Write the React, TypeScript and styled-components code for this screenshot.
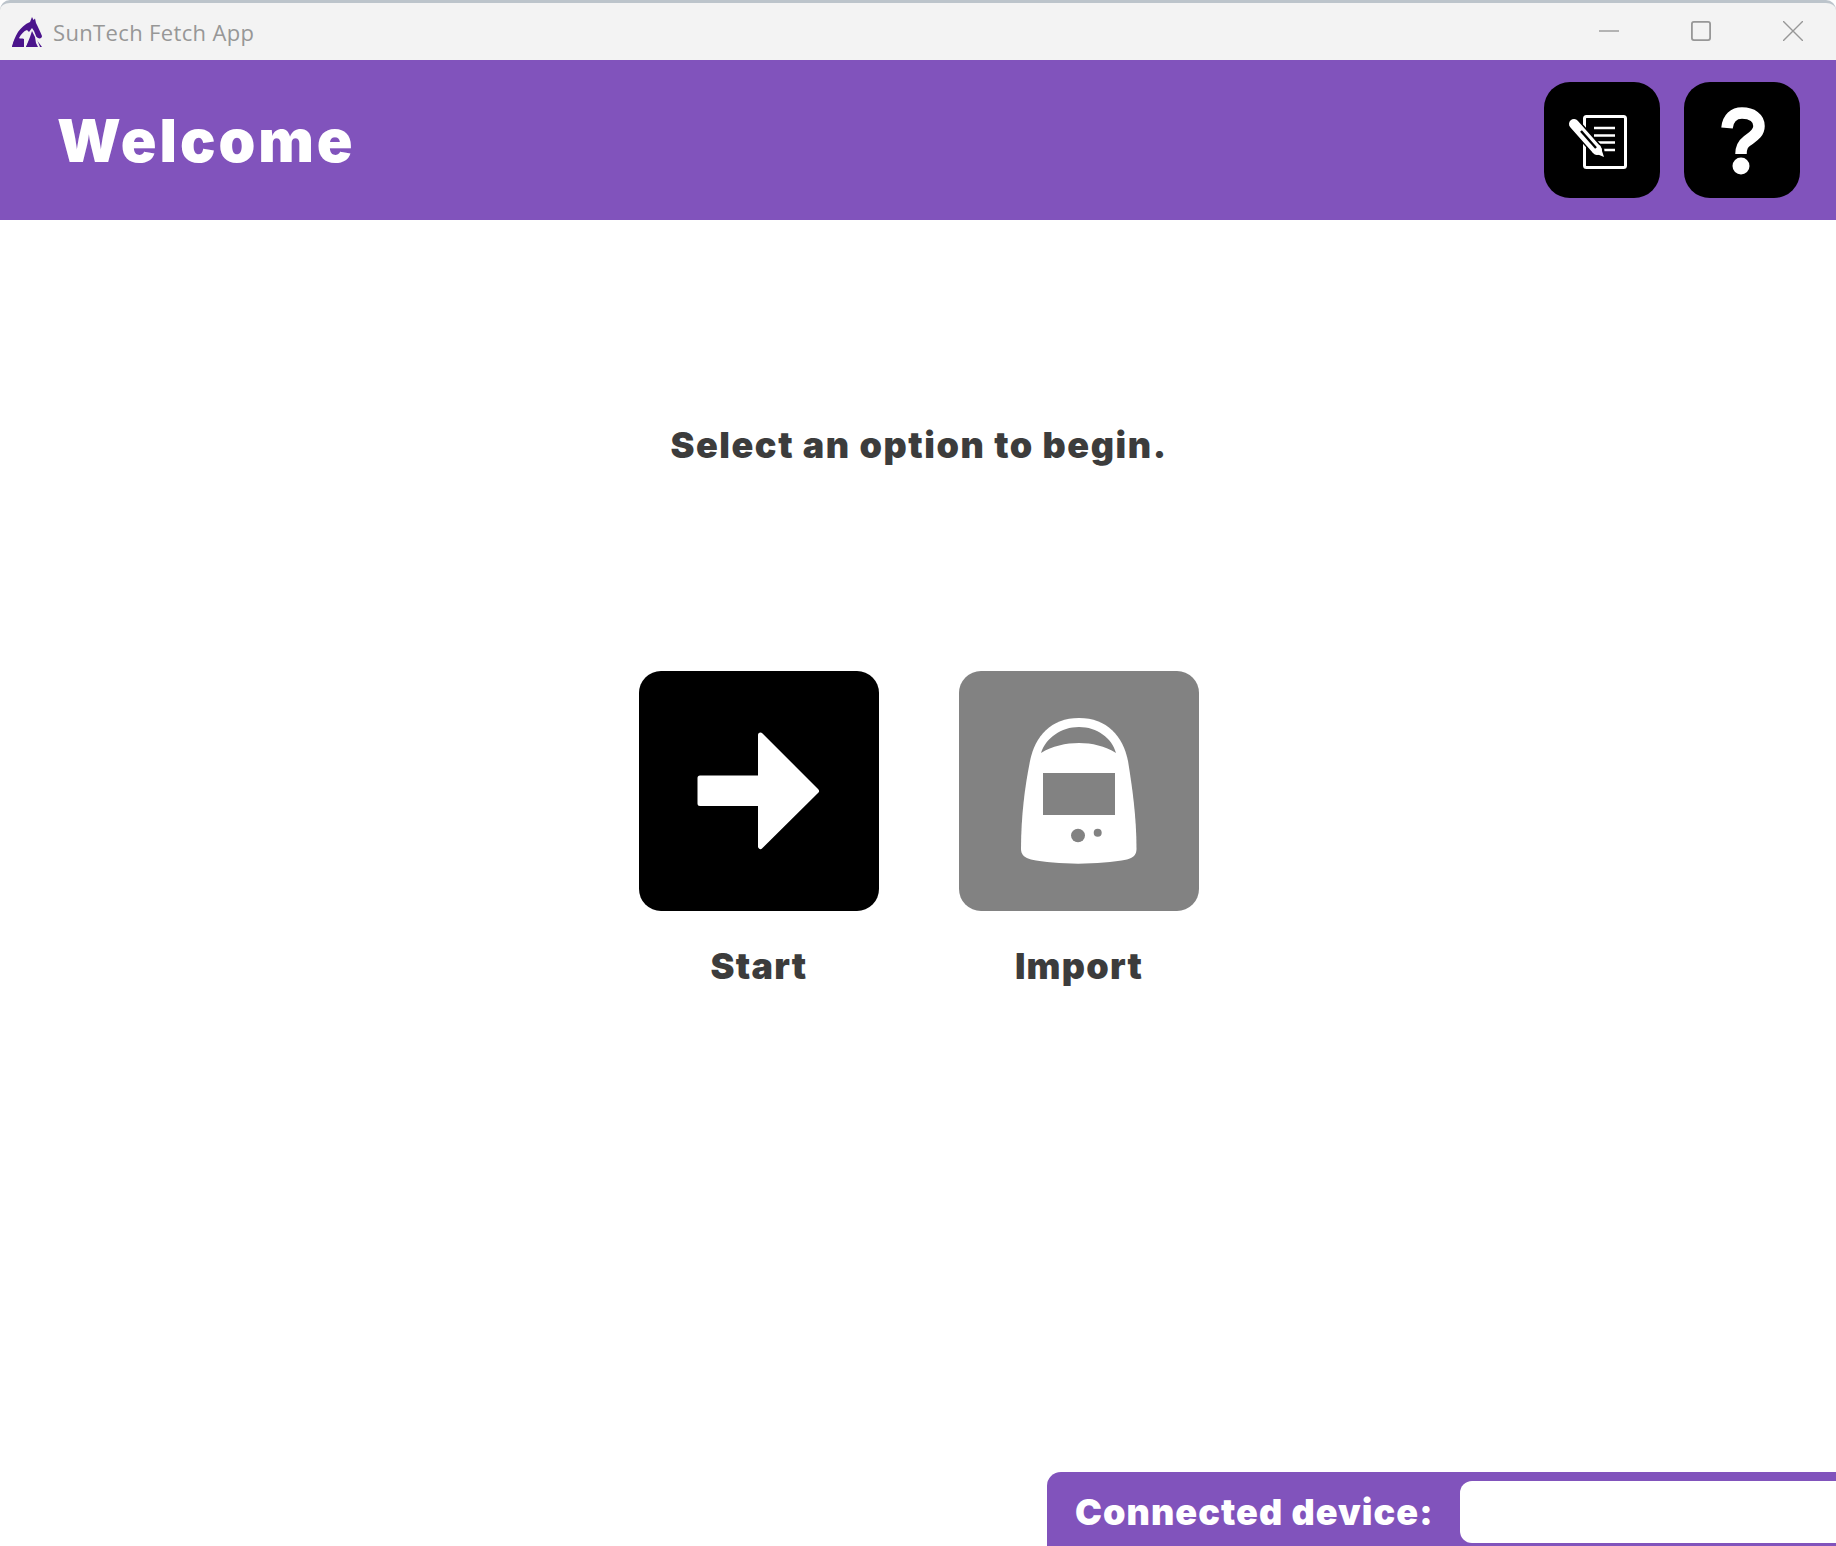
import React from "react";
import styled, { createGlobalStyle } from "styled-components";

const Global = createGlobalStyle`
  html, body { margin: 0; padding: 0; background: #fff; }
  #root { width: 1836px; height: 1546px; overflow: hidden; }
`;

const Window = styled.div`
  width: 1836px;
  height: 1546px;
  display: flex;
  flex-direction: column;
  background: #fff;
  font-family: "Inter", "Liberation Sans", sans-serif;
`;

const TitleBar = styled.div`
  box-sizing: border-box;
  height: 60px;
  flex: none;
  display: flex;
  align-items: center;
  background: #f3f3f3;
  border-top: 3px solid #bcc4cb;
  border-radius: 10px 10px 0 0;
  padding-left: 12px;
`;

const AppName = styled.span`
  margin-left: 11px;
  font-family: "Open Sans", "Noto Sans", sans-serif;
  font-size: 22px;
  letter-spacing: 0.35px;
  color: #979797;
  line-height: 1;
`;

const WindowControls = styled.div`
  margin-left: auto;
  display: flex;
  align-items: center;
  margin-top: -2px;
  padding-right: 33px;
  gap: 72px;
`;

const ControlIcon = styled.svg`
  width: 20px;
  height: 20px;
  display: block;
  fill: none;
  stroke: #979797;
  stroke-width: 1.4;
`;

const Header = styled.header`
  box-sizing: border-box;
  height: 160px;
  flex: none;
  display: flex;
  align-items: center;
  justify-content: space-between;
  background: #8153bc;
  padding: 0 36px 0 57px;
`;

const Heading = styled.h1`
  margin: 0;
  font-size: 59px;
  font-weight: 900;
  color: #fff;
  letter-spacing: 2.9px;
`;

const HeaderActions = styled.div`
  display: flex;
  gap: 24px;
`;

const SquareButton = styled.button`
  width: 116px;
  height: 116px;
  padding: 0;
  border: 0;
  border-radius: 26px;
  background: #000;
  display: flex;
  align-items: center;
  justify-content: center;
`;

const Main = styled.main`
  flex: 1;
  display: flex;
  flex-direction: column;
  align-items: center;
  padding: 203px 0 0 2px;
`;

const Prompt = styled.p`
  margin: 0;
  font-size: 36px;
  line-height: 44px;
  font-weight: 900;
  letter-spacing: 1.55px;
  color: #3c3c3c;
`;

const Options = styled.div`
  margin-top: 204px;
  display: flex;
  gap: 80px;
`;

const Option = styled.div`
  display: flex;
  flex-direction: column;
  align-items: center;
  gap: 35px;
`;

const OptionTile = styled.button<{ $muted?: boolean }>`
  width: 240px;
  height: 240px;
  padding: 0;
  border: 0;
  border-radius: 22px;
  background: ${(p) => (p.$muted ? "#828282" : "#000")};
  display: flex;
  align-items: center;
  justify-content: center;
`;

const OptionLabel = styled.span`
  font-size: 36px;
  line-height: 40px;
  font-weight: 900;
  letter-spacing: 1.2px;
  color: #3c3c3c;
`;

const DeviceBar = styled.footer`
  box-sizing: border-box;
  flex: none;
  align-self: flex-end;
  width: 789px;
  height: 74px;
  display: flex;
  align-items: flex-start;
  background: #8153bc;
  border-radius: 14px 0 0 0;
  padding: 9px 0 0 28px;
`;

const DeviceLabel = styled.span`
  width: 385px;
  flex: none;
  font-size: 36px;
  line-height: 62px;
  font-weight: 900;
  letter-spacing: 1.05px;
  color: #fff;
  white-space: nowrap;
`;

const DeviceField = styled.div`
  flex: 1;
  height: 62px;
  background: #fff;
  border-radius: 12px 0 0 12px;
`;

const Logo = () => (
  <svg width="30" height="30" viewBox="0 0 30 30" aria-hidden="true">
    <path
      fill="#4b148c"
      d="M0 30 C1 25 3 20 6 15 C9 11 13 7 18 5 L20 0 L21.5 3 L23 1.5 L24 6 C26 10 28 14 30 19 C30 21 28 22 26 21 L23 19 L24 22 L27 26 L30 30 Z"
    />
    <path
      fill="#f3f3f3"
      d="M7 21 C9 17 12 14 15 13 L17 15 L20 11 L22 14 L24 19 L26 25 L28 30 L25 30 L22 26 C20 24 19 23 17 24 L14 30 L12 30 L12 22 C10 21 8 22 7 21 Z"
    />
    <path fill="#4b148c" d="M14 30 L16 25 L18 20 L20 14 L23 20 L24 26 L26 30 Z" />
    <path fill="#4b148c" d="M0 30 L2 24 L8 22 L12 24 L12 30 Z" />
  </svg>
);

const NotesIcon = () => (
  <svg width="116" height="116" viewBox="0 0 116 116" aria-hidden="true">
    <rect x="40.5" y="34.5" width="41" height="51" rx="2" fill="none" stroke="#fff" strokeWidth="3" />
    <path d="M50 46H71M50 53.5H71M50 60.5H71M50 68H71" fill="none" stroke="#fff" strokeWidth="2.6" />
    <path d="M30 42 L54 69" fill="none" stroke="#000" strokeWidth="13" strokeLinecap="round" />
    <path d="M30 42 L53 68" fill="none" stroke="#fff" strokeWidth="10" strokeLinecap="round" />
    <path d="M48 70 L56 63 L60 75 Z" fill="#fff" />
    <path d="M37 49 L52 66" fill="none" stroke="#000" strokeWidth="2.4" />
  </svg>
);

const HelpIcon = () => (
  <svg width="116" height="116" viewBox="0 0 116 116" aria-hidden="true">
    <path
      fill="none"
      stroke="#fff"
      strokeWidth="11.5"
      d="M43 46 C44 36 50 31 58 31 C68 31 75 36 75 44 C75 52 68 55 63 59 C59 62 57 65 57 72"
    />
    <circle cx="57" cy="84" r="8.5" fill="#fff" />
  </svg>
);

const ArrowIcon = () => (
  <svg width="240" height="240" viewBox="0 0 240 240" aria-hidden="true">
    <path
      fill="#fff"
      stroke="#fff"
      strokeWidth="5"
      strokeLinejoin="round"
      d="M61 107 H121.5 V64 L177.5 120 L121.5 175.5 V132.5 H61 Z"
    />
  </svg>
);

const DeviceIcon = () => (
  <svg width="240" height="240" viewBox="0 0 240 240" aria-hidden="true">
    <path
      fill="#fff"
      d="M120 47 C148 47 164 65 169 90 C173 115 177.5 145 177.5 178 C177.5 184 174 187 168 188.5 C140 194 98 194 72 188.5 C66 187 62 184 62 178 C62 145 66 115 71 90 C76 65 92 47 120 47 Z"
    />
    <path
      fill="#828282"
      d="M82 82 C87 67 102 56 120 56 C138 56 153 67 157 82 C146 75 133 72 120 72 C107 72 93 75 82 82 Z"
    />
    <rect x="84" y="102" width="72" height="42" fill="#828282" />
    <ellipse cx="119" cy="164.5" rx="7" ry="6.7" fill="#828282" />
    <circle cx="138.7" cy="161.7" r="4" fill="#828282" />
  </svg>
);

export default function App() {
  return (
    <Window>
      <Global />
      <TitleBar>
        <Logo />
        <AppName>SunTech Fetch App</AppName>
        <WindowControls>
          <ControlIcon viewBox="0 0 20 20">
            <path d="M0 10H20" />
          </ControlIcon>
          <ControlIcon viewBox="0 0 20 20">
            <rect x="0.9" y="0.9" width="18.2" height="18.2" rx="2" strokeWidth="1.8" />
          </ControlIcon>
          <ControlIcon viewBox="0 0 20 20">
            <path d="M0 0L20 20M20 0L0 20" />
          </ControlIcon>
        </WindowControls>
      </TitleBar>
      <Header>
        <Heading>Welcome</Heading>
        <HeaderActions>
          <SquareButton aria-label="Notes">
            <NotesIcon />
          </SquareButton>
          <SquareButton aria-label="Help">
            <HelpIcon />
          </SquareButton>
        </HeaderActions>
      </Header>
      <Main>
        <Prompt>Select an option to begin.</Prompt>
        <Options>
          <Option>
            <OptionTile aria-label="Start">
              <ArrowIcon />
            </OptionTile>
            <OptionLabel>Start</OptionLabel>
          </Option>
          <Option>
            <OptionTile $muted aria-label="Import">
              <DeviceIcon />
            </OptionTile>
            <OptionLabel>Import</OptionLabel>
          </Option>
        </Options>
      </Main>
      <DeviceBar>
        <DeviceLabel>Connected device:</DeviceLabel>
        <DeviceField />
      </DeviceBar>
    </Window>
  );
}
